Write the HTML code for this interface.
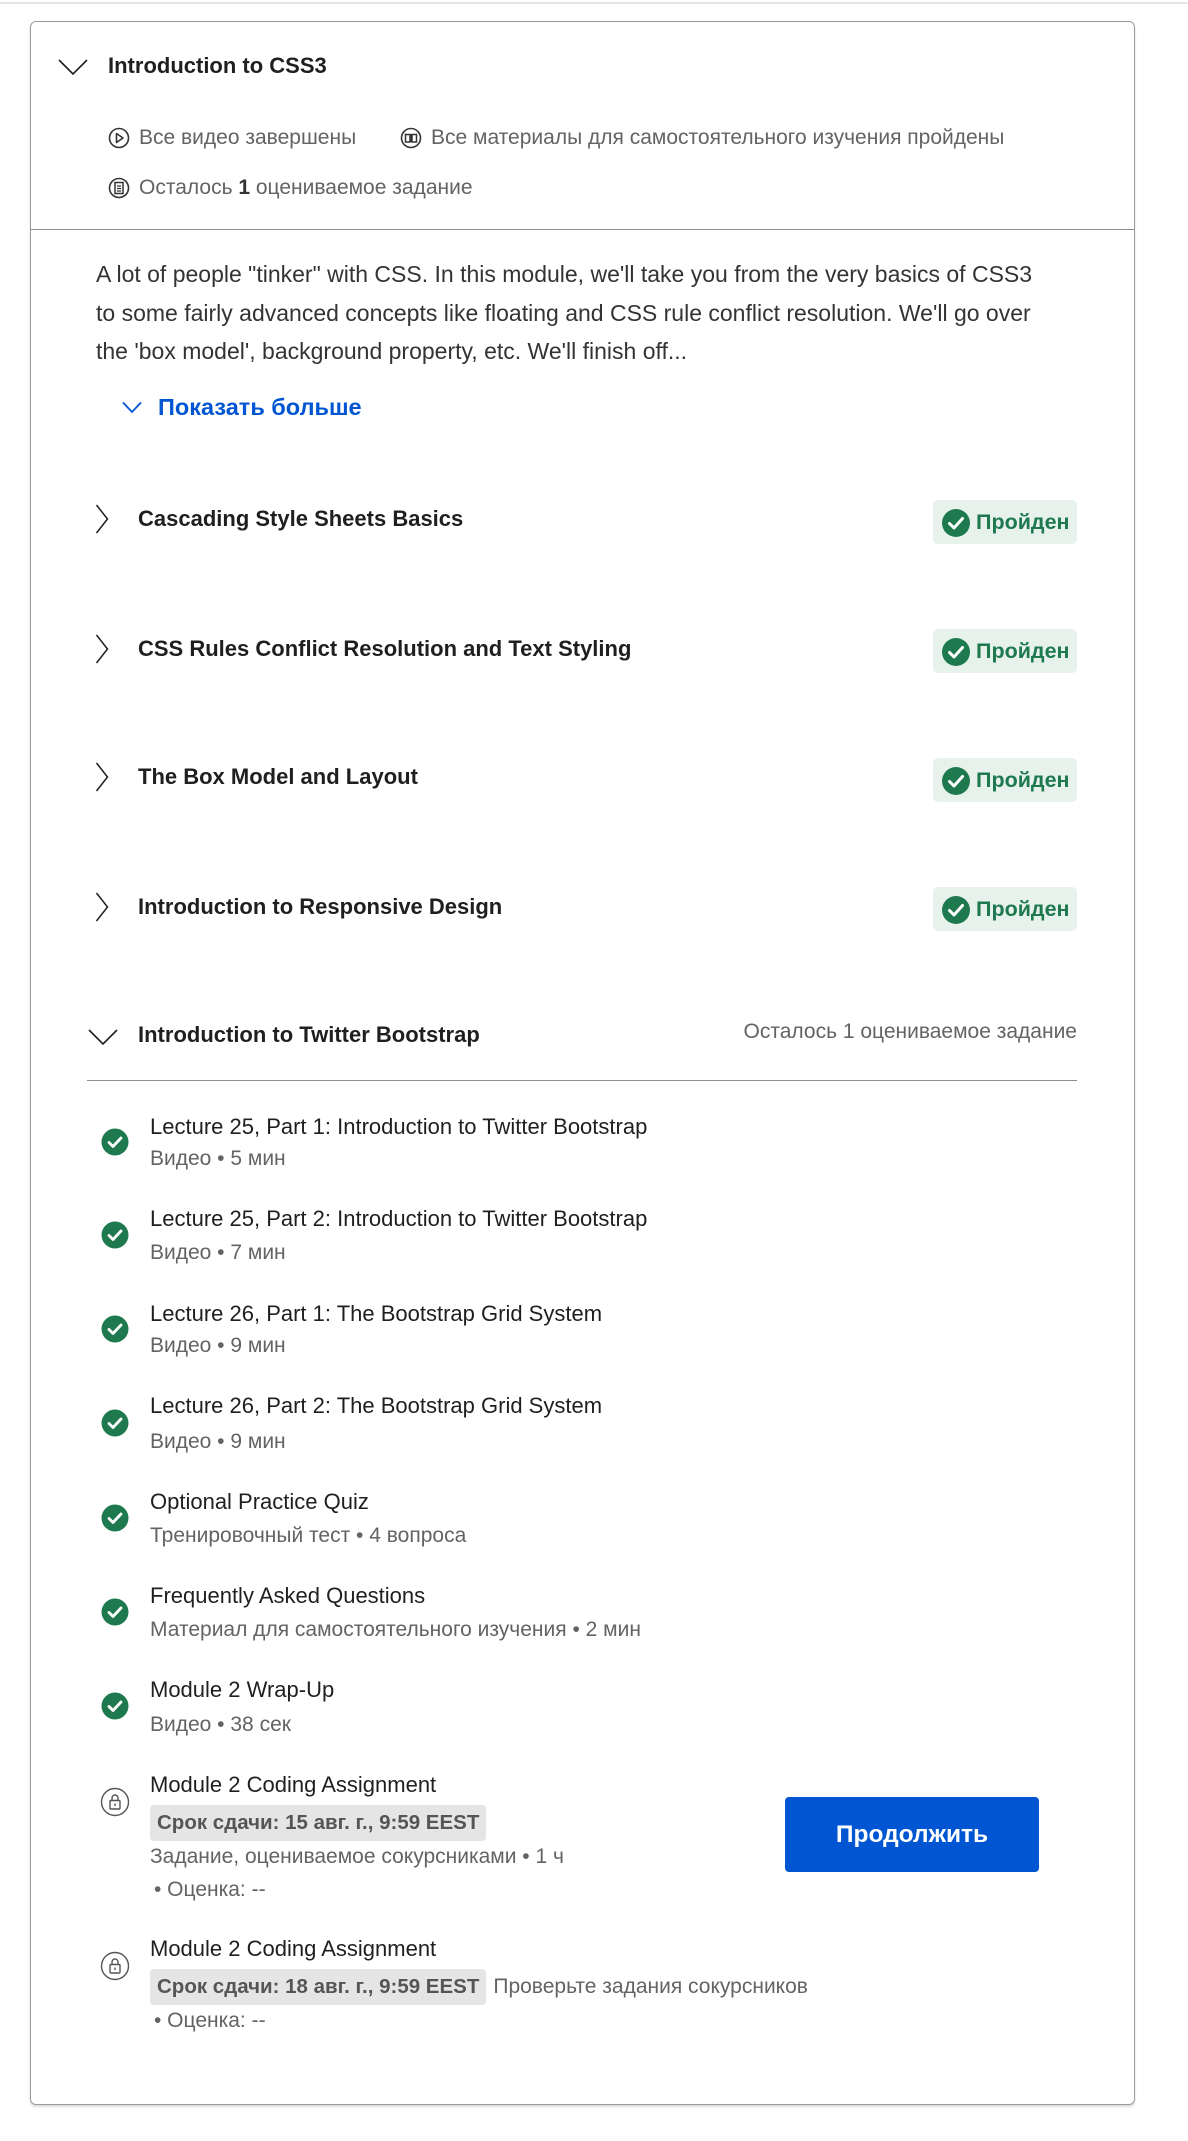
<!DOCTYPE html>
<html><head><meta charset="utf-8"><style>
*{margin:0;padding:0;box-sizing:border-box}
body{width:1188px;height:2141px;background:#fff;font-family:"Liberation Sans",sans-serif;position:relative;overflow:hidden;color:#1f1f1f}
.a{position:absolute;white-space:nowrap;line-height:30px}
.topline{position:absolute;left:0;top:2px;width:1188px;height:2px;background:#e6e6e6}
.card{position:absolute;left:30px;top:21px;width:1105px;height:2084px;border:1px solid #9b9b9b;border-radius:6px;box-shadow:0 2px 2px rgba(0,0,0,.15)}
.b{font-weight:bold;font-size:22px;color:#1f1f1f}
.meta{font-size:21px;color:#636363}
.t{font-size:22px;color:#1f1f1f}
.badge{position:absolute;left:933px;width:144px;height:44px;background:#e8f2ed;border-radius:5px}
.badge span{position:absolute;left:43px;top:7px;line-height:30px;font-weight:bold;font-size:21.5px;color:#1e7a4e}
.badge svg{position:absolute;left:8px;top:8px}
.chip{display:inline-block;height:36px;background:#e5e5e5;border-radius:4px;font-weight:bold;font-size:20.5px;color:#555;padding:0 7px;line-height:36px;vertical-align:middle}
</style></head><body>
<div class="topline"></div>
<div class="card"></div>

<svg class="a" style="left:58px;top:58px" width="30" height="18" viewBox="0 0 30 18"><path d="M1 2 L15 16 L29 2" fill="none" stroke="#1f1f1f" stroke-width="1.6"/></svg>
<div class="a b" style="left:108px;top:51px">Introduction to CSS3</div>

<svg class="a" style="left:108px;top:127px" width="22" height="22" viewBox="0 0 22 22"><circle cx="11" cy="11" r="9.5" fill="none" stroke="#333" stroke-width="1.6"/><path d="M8.5 6.5 L15 11 L8.5 15.5 Z" fill="none" stroke="#333" stroke-width="1.6" stroke-linejoin="round"/></svg>
<div class="a meta" style="left:139px;top:123px">Все видео завершены</div>
<svg class="a" style="left:400px;top:127px" width="22" height="22" viewBox="0 0 22 22"><circle cx="11" cy="11" r="9.5" fill="none" stroke="#333" stroke-width="1.6"/><path d="M5.5 7.5 H10 V15 H5.5 Z M12 7.5 H16.5 V15 H12 Z M11 7 V15" fill="none" stroke="#333" stroke-width="1.5"/></svg>
<div class="a meta" style="left:431px;top:123px">Все материалы для самостоятельного изучения пройдены</div>
<svg class="a" style="left:108px;top:177px" width="22" height="22" viewBox="0 0 22 22"><circle cx="11" cy="11" r="9.5" fill="none" stroke="#333" stroke-width="1.6"/><rect x="7" y="5.5" width="8" height="11" fill="none" stroke="#333" stroke-width="1.5"/><path d="M9 9 H13 M9 11.5 H13 M9 14 H13" stroke="#333" stroke-width="1.3"/></svg>
<div class="a meta" style="left:139px;top:173px">Осталось <b style="color:#333">1</b> оцениваемое задание</div>

<div class="a" style="left:31px;top:229px;width:1103px;height:1px;background:#8f8f8f"></div>

<div class="a" style="left:96px;top:255px;font-size:23px;line-height:38.5px;color:#333">A lot of people "tinker" with CSS. In this module, we'll take you from the very basics of CSS3<br>to some fairly advanced concepts like floating and CSS rule conflict resolution. We'll go over<br>the 'box model', background property, etc. We'll finish off...</div>

<svg class="a" style="left:122px;top:401px" width="20" height="13" viewBox="0 0 20 13"><path d="M1 1.5 L10 11 L19 1.5" fill="none" stroke="#0056d2" stroke-width="1.8"/></svg>
<div class="a" style="left:158px;top:392px;font-size:23.5px;font-weight:bold;color:#0056d2">Показать больше</div>

<svg class="a" style="left:95px;top:504px" width="14" height="30" viewBox="0 0 14 30"><path d="M1.5 1 L12.5 15 L1.5 29" fill="none" stroke="#1f1f1f" stroke-width="1.5"/></svg>
<div class="a b" style="left:138px;top:504px">Cascading Style Sheets Basics</div>
<div class="badge" style="top:500px"><svg width="30" height="30" viewBox="0 0 30 30"><circle cx="15" cy="15" r="14" fill="#1e7a4e"/><path d="M8.5 15.5 L13 20 L21.5 10.5" fill="none" stroke="#fff" stroke-width="3" stroke-linecap="round" stroke-linejoin="round"/></svg><span>Пройден</span></div>

<svg class="a" style="left:95px;top:634px" width="14" height="30" viewBox="0 0 14 30"><path d="M1.5 1 L12.5 15 L1.5 29" fill="none" stroke="#1f1f1f" stroke-width="1.5"/></svg>
<div class="a b" style="left:138px;top:634px">CSS Rules Conflict Resolution and Text Styling</div>
<div class="badge" style="top:629px"><svg width="30" height="30" viewBox="0 0 30 30"><circle cx="15" cy="15" r="14" fill="#1e7a4e"/><path d="M8.5 15.5 L13 20 L21.5 10.5" fill="none" stroke="#fff" stroke-width="3" stroke-linecap="round" stroke-linejoin="round"/></svg><span>Пройден</span></div>

<svg class="a" style="left:95px;top:762px" width="14" height="30" viewBox="0 0 14 30"><path d="M1.5 1 L12.5 15 L1.5 29" fill="none" stroke="#1f1f1f" stroke-width="1.5"/></svg>
<div class="a b" style="left:138px;top:762px">The Box Model and Layout</div>
<div class="badge" style="top:758px"><svg width="30" height="30" viewBox="0 0 30 30"><circle cx="15" cy="15" r="14" fill="#1e7a4e"/><path d="M8.5 15.5 L13 20 L21.5 10.5" fill="none" stroke="#fff" stroke-width="3" stroke-linecap="round" stroke-linejoin="round"/></svg><span>Пройден</span></div>

<svg class="a" style="left:95px;top:892px" width="14" height="30" viewBox="0 0 14 30"><path d="M1.5 1 L12.5 15 L1.5 29" fill="none" stroke="#1f1f1f" stroke-width="1.5"/></svg>
<div class="a b" style="left:138px;top:892px">Introduction to Responsive Design</div>
<div class="badge" style="top:887px"><svg width="30" height="30" viewBox="0 0 30 30"><circle cx="15" cy="15" r="14" fill="#1e7a4e"/><path d="M8.5 15.5 L13 20 L21.5 10.5" fill="none" stroke="#fff" stroke-width="3" stroke-linecap="round" stroke-linejoin="round"/></svg><span>Пройден</span></div>

<svg class="a" style="left:88px;top:1028px" width="30" height="18" viewBox="0 0 30 18"><path d="M1 2 L15 16 L29 2" fill="none" stroke="#1f1f1f" stroke-width="1.6"/></svg>
<div class="a b" style="left:138px;top:1020px">Introduction to Twitter Bootstrap</div>
<div class="a meta" style="right:111px;top:1017px">Осталось 1 оцениваемое задание</div>
<div class="a" style="left:87px;top:1080px;width:990px;height:1px;background:#8f8f8f"></div>

<svg class="a" style="left:101px;top:1128px" width="28" height="28" viewBox="0 0 28 28"><circle cx="14" cy="14" r="13.5" fill="#1e7a4e"/><path d="M8 14.5 L12 18.5 L20 10" fill="none" stroke="#fff" stroke-width="2.8" stroke-linecap="round" stroke-linejoin="round"/></svg>
<div class="a t" style="left:150px;top:1112px">Lecture 25, Part 1: Introduction to Twitter Bootstrap</div>
<div class="a meta" style="left:150px;top:1144px">Видео • 5 мин</div>

<svg class="a" style="left:101px;top:1221px" width="28" height="28" viewBox="0 0 28 28"><circle cx="14" cy="14" r="13.5" fill="#1e7a4e"/><path d="M8 14.5 L12 18.5 L20 10" fill="none" stroke="#fff" stroke-width="2.8" stroke-linecap="round" stroke-linejoin="round"/></svg>
<div class="a t" style="left:150px;top:1204px">Lecture 25, Part 2: Introduction to Twitter Bootstrap</div>
<div class="a meta" style="left:150px;top:1238px">Видео • 7 мин</div>

<svg class="a" style="left:101px;top:1315px" width="28" height="28" viewBox="0 0 28 28"><circle cx="14" cy="14" r="13.5" fill="#1e7a4e"/><path d="M8 14.5 L12 18.5 L20 10" fill="none" stroke="#fff" stroke-width="2.8" stroke-linecap="round" stroke-linejoin="round"/></svg>
<div class="a t" style="left:150px;top:1299px">Lecture 26, Part 1: The Bootstrap Grid System</div>
<div class="a meta" style="left:150px;top:1331px">Видео • 9 мин</div>

<svg class="a" style="left:101px;top:1409px" width="28" height="28" viewBox="0 0 28 28"><circle cx="14" cy="14" r="13.5" fill="#1e7a4e"/><path d="M8 14.5 L12 18.5 L20 10" fill="none" stroke="#fff" stroke-width="2.8" stroke-linecap="round" stroke-linejoin="round"/></svg>
<div class="a t" style="left:150px;top:1391px">Lecture 26, Part 2: The Bootstrap Grid System</div>
<div class="a meta" style="left:150px;top:1427px">Видео • 9 мин</div>

<svg class="a" style="left:101px;top:1504px" width="28" height="28" viewBox="0 0 28 28"><circle cx="14" cy="14" r="13.5" fill="#1e7a4e"/><path d="M8 14.5 L12 18.5 L20 10" fill="none" stroke="#fff" stroke-width="2.8" stroke-linecap="round" stroke-linejoin="round"/></svg>
<div class="a t" style="left:150px;top:1487px">Optional Practice Quiz</div>
<div class="a meta" style="left:150px;top:1521px">Тренировочный тест • 4 вопроса</div>

<svg class="a" style="left:101px;top:1598px" width="28" height="28" viewBox="0 0 28 28"><circle cx="14" cy="14" r="13.5" fill="#1e7a4e"/><path d="M8 14.5 L12 18.5 L20 10" fill="none" stroke="#fff" stroke-width="2.8" stroke-linecap="round" stroke-linejoin="round"/></svg>
<div class="a t" style="left:150px;top:1581px">Frequently Asked Questions</div>
<div class="a meta" style="left:150px;top:1615px">Материал для самостоятельного изучения • 2 мин</div>

<svg class="a" style="left:101px;top:1692px" width="28" height="28" viewBox="0 0 28 28"><circle cx="14" cy="14" r="13.5" fill="#1e7a4e"/><path d="M8 14.5 L12 18.5 L20 10" fill="none" stroke="#fff" stroke-width="2.8" stroke-linecap="round" stroke-linejoin="round"/></svg>
<div class="a t" style="left:150px;top:1675px">Module 2 Wrap-Up</div>
<div class="a meta" style="left:150px;top:1710px">Видео • 38 сек</div>

<svg class="a" style="left:100px;top:1787px" width="30" height="30" viewBox="0 0 30 30"><circle cx="15" cy="15" r="13.5" fill="none" stroke="#555" stroke-width="1.4"/><rect x="10" y="13.5" width="10" height="8.5" rx="1" fill="none" stroke="#555" stroke-width="1.4"/><path d="M12 13.5 V11 A3 3 0 0 1 18 11 V13.5" fill="none" stroke="#555" stroke-width="1.4"/><path d="M15 16.5 V19" stroke="#555" stroke-width="1.4"/></svg>
<div class="a t" style="left:150px;top:1770px">Module 2 Coding Assignment</div>
<div class="a" style="left:150px;top:1805px;line-height:36px"><span class="chip">Срок сдачи: 15 авг. г., 9:59 EEST</span></div>
<div class="a meta" style="left:150px;top:1842px">Задание, оцениваемое сокурсниками • 1 ч</div>
<div class="a meta" style="left:154px;top:1875px">• Оценка: --</div>
<div class="a" style="left:785px;top:1797px;width:254px;height:75px;background:#0056d2;border-radius:4px;color:#fff;font-weight:bold;font-size:24.5px;text-align:center;line-height:75px">Продолжить</div>

<svg class="a" style="left:100px;top:1951px" width="30" height="30" viewBox="0 0 30 30"><circle cx="15" cy="15" r="13.5" fill="none" stroke="#555" stroke-width="1.4"/><rect x="10" y="13.5" width="10" height="8.5" rx="1" fill="none" stroke="#555" stroke-width="1.4"/><path d="M12 13.5 V11 A3 3 0 0 1 18 11 V13.5" fill="none" stroke="#555" stroke-width="1.4"/><path d="M15 16.5 V19" stroke="#555" stroke-width="1.4"/></svg>
<div class="a t" style="left:150px;top:1934px">Module 2 Coding Assignment</div>
<div class="a" style="left:150px;top:1969px;line-height:36px"><span class="chip">Срок сдачи: 18 авг. г., 9:59 EEST</span><span class="meta" style="margin-left:7px;vertical-align:middle">Проверьте задания сокурсников</span></div>
<div class="a meta" style="left:154px;top:2006px">• Оценка: --</div>
</body></html>
